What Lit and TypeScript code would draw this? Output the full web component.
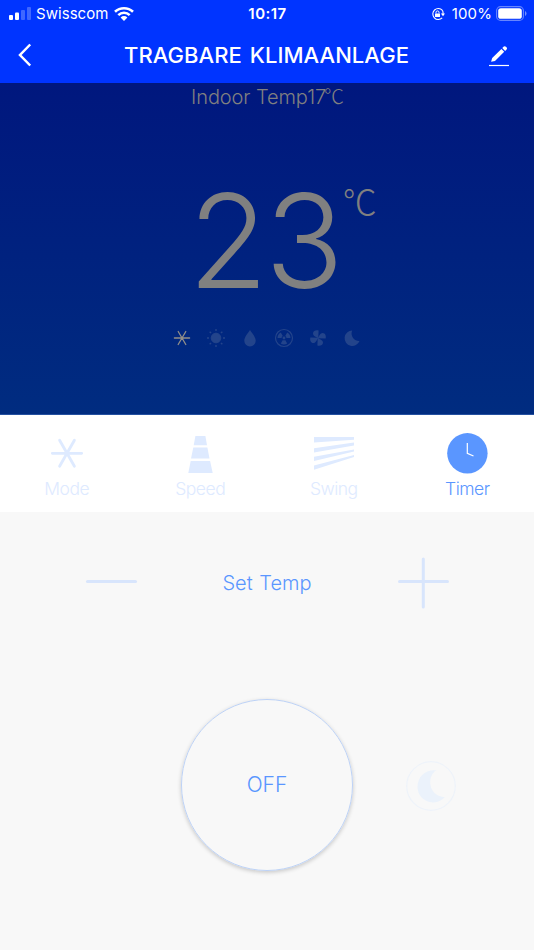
import { LitElement, html, css, svg } from "lit";
import { customElement } from "lit/decorators.js";

const moon = "M10 0A10 10 0 1 0 19.5 13.5A9.6 9.6 0 0 1 10 0Z";

@customElement("app-root")
export class AppRoot extends LitElement {
  static styles = css`
    :host { display: flex; flex-direction: column; width: 534px; height: 950px; overflow: hidden;
      background: #f8f8f8; font-family: Inter, "Noto Sans CJK SC", sans-serif; font-weight: 300; color: #5a96ff; }
    * { box-sizing: border-box; }
    svg { display: block; flex: none; overflow: visible; }
    .top { height: 83px; flex: none; background: #0034ff; color: #fff; }
    .status { height: 28px; display: grid; grid-template-columns: 1fr auto 1fr; align-items: center; padding: 0 7px 0 9px; font-size: 15px; font-weight: 400; line-height: 28px; }
    .left, .right { display: flex; align-items: center; }
    .left svg, .right svg { margin-top: -1px; }
    .carrier { margin: 0 6px 0 5px; letter-spacing: 0.05px; }
    .clock { font-weight: 600; letter-spacing: 0.45px; margin-left: -1px; }
    .right { justify-content: flex-end; }
    .right svg:first-child { margin-right: 1px; }
    .pct { margin: 0 4px 0 6px; letter-spacing: 0.1px; }
    .nav { height: 55px; display: grid; grid-template-columns: 16px 1fr 22px; align-items: center; padding: 0 24px 1px 17px; }
    .title { font-size: 22px; font-weight: 500; line-height: 54px; white-space: nowrap; letter-spacing: .05px; word-spacing: 2px; text-align: center; padding-left: 12px; }
    .hero { height: 332px; flex: none; background: linear-gradient(#00177e, #002c80); color: #808080; display: flex; flex-direction: column; align-items: center; border-bottom: 1px solid #2450a0; }
    .indoor { font-size: 20px; line-height: 28px; height: 28px; white-space: nowrap; display: flex; letter-spacing: -.1px; padding-left: 1px; }
    .degc { font: 300 20px/26px "Noto Sans CJK SC", sans-serif; margin-left: -2px; }
    .temp { display: flex; margin: 65px 0 0 31px; height: 130px; }
    .num { font-size: 130px; line-height: 130px; font-weight: 350; letter-spacing: -3px; }
    .unit { font: 300 34px/40px "Noto Sans CJK SC", sans-serif; margin: 5px 0 0 2px; }
    .modes { display: flex; width: 188.5px; justify-content: space-between; margin-top: 23px; }
    .tabs { height: 97px; flex: none; background: #fff; display: grid; grid-template-columns: repeat(4, 1fr); }
    .tab { display: flex; flex-direction: column; align-items: center; padding-top: 18px; color: #deeaff; }
    .tab.on { color: #5a96ff; }
    .label { font-size: 17.5px; line-height: 24px; margin-top: 4px; letter-spacing: -.5px; }
    .set { height: 142px; flex: none; display: flex; align-items: center; justify-content: space-between; padding: 0 85px; }
    .set svg { margin-top: -4px; }
    .settext { font-size: 20px; letter-spacing: 0; word-spacing: 1px; }
    .power { flex: 1; display: grid; grid-template-columns: 1fr 172px 1fr; padding-top: 44.5px; }
    .off { height: 172px; border-radius: 50%; border: 1px solid #bdd2f6; box-shadow: 0 1.5px 4px rgba(0,0,0,.2); display: grid; place-items: center; font-size: 21px; padding-bottom: 1px; }
    .sleep { margin: 62.5px 0 0 53px; }
  `;

  star(size: number, sw: number) {
    return html`<svg width=${size} height=${size} viewBox="-20 -20 40 40" fill="none" stroke="currentColor" stroke-width=${sw} stroke-linecap="round"><path d="M-14.7 .3H14.7M-7.4 -12.8L7.4 13.2M7.4 -12.8L-7.4 13.2"/></svg>`;
  }

  modeIcons() {
    const rays = [0, 45, 90, 135, 180, 225, 270, 315];
    return html`<div class="modes">
      <svg width="18" height="18" viewBox="-9 -9 18 18" stroke="#918f89" stroke-width="1.3" stroke-linecap="round"><path d="M-7.6 0H7.6M-3.8 -6.5L3.8 6.5M3.8 -6.5L-3.8 6.5"/></svg>
      <svg width="18" height="18" viewBox="-9 -9 18 18" fill="#23448b" stroke="#23448b"><circle r="4.8"/>${rays.map(a => svg`<path d="M0 -7V-9" stroke-width="1.4" transform="rotate(${a})"/>`)}</svg>
      <svg width="18" height="18" viewBox="-9 -9 18 18" fill="#23448b"><path d="M0 -8C2 -5 5.7 -1 5.7 2.7A5.7 5.7 0 0 1 -5.7 2.7C-5.7 -1 -2 -5 0 -8Z"/></svg>
      <svg width="18" height="18" viewBox="-9 -9 18 18" fill="#23448b"><circle r="8.5" fill="none" stroke="#23448b" stroke-width="1.2"/><circle r="1.4"/>${[0, 120, 240].map(a => svg`<path d="M-1.2 2.1L-3.2 5.6A6.4 6.4 0 0 0 3.2 5.6L1.2 2.1A2.4 2.4 0 0 1 -1.2 2.1Z" transform="rotate(${a})"/>`)}</svg>
      <svg width="18" height="18" viewBox="-9 -9 18 18" fill="#23448b">${[0, 90, 180, 270].map(a => svg`<path d="M.3 .3L.6 -7.6C-2 -8.4 -5 -7.2 -5 -4.6C-5 -2.2 -2.2 -1.4 .3 .3Z" transform="rotate(${a})"/>`)}</svg>
      <svg width="18" height="18" viewBox="0 0 18 18" fill="#23448b"><path transform="translate(1.5 1.5) scale(.77)" d=${moon}/></svg>
    </div>`;
  }

  render() {
    return html`
      <div class="top">
        <div class="status">
          <div class="left">
            <svg width="22" height="14" viewBox="0 0 22 14" fill="#fff"><rect y="8" width="4" height="5" rx="1"/><rect x="6" y="5.5" width="4" height="7.5" rx="1"/><g opacity=".25"><rect x="12" y="3" width="4" height="10" rx="1"/><rect x="18" y="0" width="4" height="13" rx="1"/></g></svg>
            <span class="carrier">Swisscom</span>
            <svg width="20" height="14" viewBox="0 0 20 14"><g fill="none" stroke="#fff" stroke-width="2.6"><path d="M1 4.8A13 13 0 0 1 19 4.8"/><path d="M4.3 8.1A8.2 8.2 0 0 1 15.7 8.1"/></g><path fill="#fff" d="M6.6 10.4A4.9 4.9 0 0 1 13.4 10.4L10 13.9Z"/></svg>
          </div>
          <span class="clock">10:17</span>
          <div class="right">
            <svg width="14" height="14" viewBox="0 0 14 14"><path d="M11.4 3.3A5.5 5.5 0 1 0 11.2 10.9" fill="none" stroke="#fff" stroke-width="1.1"/><path d="M11.4 3.3A5.5 5.5 0 0 1 12 7" fill="none" stroke="#fff" stroke-width="1.1"/><path d="M9.9 6.6H14L12 9.2Z" fill="#fff"/><rect x="4" y="6.4" width="5" height="3.7" rx=".6" fill="#fff"/><path d="M5 6.5V5.4A1.5 1.5 0 0 1 8 5.4V6.5" stroke="#fff" fill="none"/></svg>
            <span class="pct">100%</span>
            <svg width="31" height="15" viewBox="0 0 31 15"><rect x=".6" y=".6" width="26.8" height="13.8" rx="4" fill="none" stroke="#fff" stroke-opacity=".4" stroke-width="1.1"/><rect x="2.2" y="2.2" width="23.6" height="10.6" rx="2.6" fill="#fff"/><path d="M29 5A2.8 2.8 0 0 1 29 10Z" fill="#fff" opacity=".45"/></svg>
          </div>
        </div>
        <div class="nav">
          <svg width="16" height="24" viewBox="0 0 16 24" fill="none" stroke="#fff" stroke-width="2.5"><path d="M13.2 1.5L3 12L13.2 22.5"/></svg>
          <span class="title">TRAGBARE KLIMAANLAGE</span>
          <svg width="22" height="24" viewBox="0 0 22 24"><path d="M1 22.5H21" stroke="#fff" stroke-width="1.2"/><path d="M3.1 18.8L4.2 15L13.4 6L16.2 8.8L7 18Z M14.3 5L15.8 3.5Q16.8 2.7 18 3.7L18.7 4.5Q19.5 5.5 18.6 6.5L17.1 8Z" fill="#fff"/></svg>
        </div>
      </div>
      <div class="hero">
        <div class="indoor"><span>Indoor Temp17</span><span class="degc">℃</span></div>
        <div class="temp"><span class="num">23</span><span class="unit">℃</span></div>
        ${this.modeIcons()}
      </div>
      <div class="tabs">
        <div class="tab">${this.star(40, 2.8)}<span class="label">Mode</span></div>
        <div class="tab"><svg width="40" height="40" viewBox="0 0 40 40" fill="currentColor"><path d="M15.4 3H25.4L27 12.3H13.7ZM13.3 14.6H27.4L29.5 25.4H11ZM10.7 28H30.1L32.7 40H8.3Z"/></svg><span class="label">Speed</span></div>
        <div class="tab"><svg width="40" height="40" viewBox="0 0 40 40" fill="currentColor"><path d="M0 4H40V6.7L0 9.6ZM0 15.2L40 9.4V12.5L0 19.5ZM0 23.7L40 16.6V18.6L0 28.1ZM0 32.5L40 22V24L0 36.7Z"/></svg><span class="label">Swing</span></div>
        <div class="tab on"><svg width="40" height="40" viewBox="0 0 40 40"><circle cx="20.4" cy="20.3" r="20.2" fill="currentColor"/><path d="M20.3 10V20.3L26.5 23" fill="none" stroke="#fff" stroke-width="1.2"/></svg><span class="label">Timer</span></div>
      </div>
      <div class="set">
        <svg width="52" height="52" viewBox="0 0 52 52" stroke="#d8e5fc" stroke-width="3" stroke-linecap="round"><path d="M2.5 26.5H50.5"/></svg>
        <span class="settext">Set Temp</span>
        <svg width="52" height="52" viewBox="0 0 52 52" stroke="#d8e5fc" stroke-width="3" stroke-linecap="round"><path d="M2.5 26.5H50.5M26.3 4V52"/></svg>
      </div>
      <div class="power">
        <span></span>
        <div class="off">OFF</div>
        <svg class="sleep" width="50" height="50" viewBox="0 0 50 50"><circle cx="25" cy="25" r="24.3" fill="none" stroke="#eef3fa" stroke-width="1.2"/><path fill="#ebf2fb" d="M30.5 9.3C24 13 22.5 22 26 28.5C29 34 34 36 38.7 36C35 40.5 30 42 25.5 41.2C17 40.5 11.5 33.5 11.5 26C11.5 15 20 8 30.5 9.3Z"/></svg>
      </div>`;
  }
}
